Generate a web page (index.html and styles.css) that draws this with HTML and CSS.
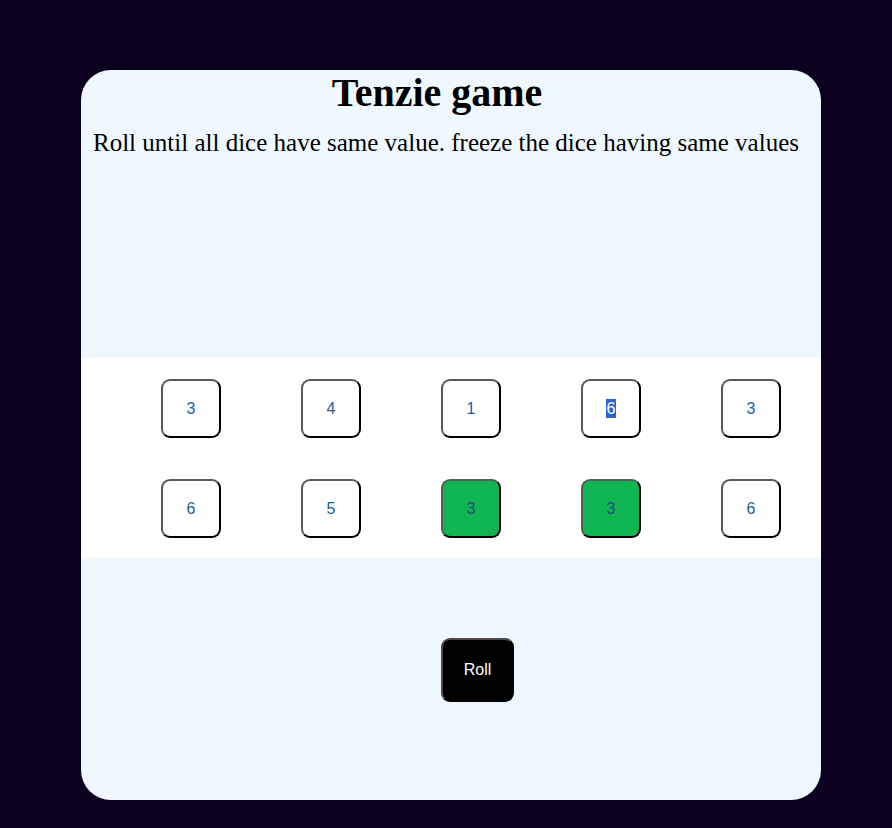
FILE: index.html
```html
<!DOCTYPE html>
<html lang="en">
<head>
<meta charset="utf-8">
<title>Tenzie game</title>
<link rel="stylesheet" href="styles.css">
</head>
<body>
<main class="card">
  <h1 class="title">Tenzie game</h1>
  <p class="intro">Roll until all dice have same value. freeze the dice having same values</p>
  <section class="dice">
    <button class="die">3</button>
    <button class="die">4</button>
    <button class="die">1</button>
    <button class="die"><span class="selected">6</span></button>
    <button class="die">3</button>
    <button class="die">6</button>
    <button class="die">5</button>
    <button class="die held">3</button>
    <button class="die held">3</button>
    <button class="die">6</button>
  </section>
  <button class="roll">Roll</button>
</main>
</body>
</html>
```
FILE: styles.css
```css
html, body {
  margin: 0;
  padding: 0;
}
body {
  background: #0c0021;
  font-family: "Liberation Serif", "Times New Roman", serif;
  padding-top: 70px;
  height: 828px;
  box-sizing: border-box;
}
.card {
  display: block;
  width: 740px;
  height: 730px;
  margin-left: 81px;
  background: #f0f8ff;
  border-radius: 30px;
  overflow: hidden;
  color: #000;
}
.title {
  margin: 0;
  font-size: 40px;
  line-height: 46px;
  font-weight: bold;
  text-align: center;
  padding-right: 28px;
}
.intro {
  margin: 12px 0 0 0;
  padding-left: 12px;
  font-size: 25px;
  line-height: 30px;
}
.dice {
  margin-top: 200px;
  height: 200px;
  box-sizing: border-box;
  background: #ffffff;
  display: grid;
  grid-template-columns: repeat(5, 60px);
  grid-auto-rows: 60px;
  column-gap: 80px;
  row-gap: 40px;
  padding: 21px 0 0 80px;
}
.die {
  width: 60px;
  height: 59px;
  box-sizing: border-box;
  background: #ffffff;
  border: 2px solid;
  border-color: #5a5a5a #000 #000 #5a5a5a;
  border-radius: 9px;
  font-family: "Liberation Sans", Arial, sans-serif;
  font-size: 16px;
  color: #245a9c;
  padding: 0;
  display: flex;
  align-items: center;
  justify-content: center;
}
.die.held {
  background: #10b553;
  color: #1e4a7a;
}
.selected {
  display: block;
  height: 19px;
  line-height: 19px;
  padding: 0 1px;
  background: #2f63d0;
  color: #ffffff;
}
.roll {
  display: block;
  margin: 80px 0 0 360px;
  width: 73px;
  height: 64px;
  box-sizing: border-box;
  background: #000000;
  color: #ffffff;
  border: 2px solid;
  border-color: #4a4a4a #000 #000 #4a4a4a;
  border-radius: 9px;
  font-family: "Liberation Sans", Arial, sans-serif;
  font-size: 16px;
  padding: 0;
}
```
